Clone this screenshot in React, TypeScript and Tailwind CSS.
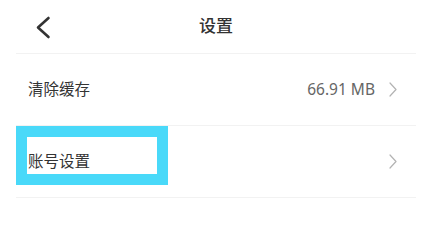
import React from "react";

const Chevron: React.FC = () => (
  <svg width="8" height="15" viewBox="0 0 8 15" fill="none" className="shrink-0">
    <polyline points="1,1 7,7.5 1,14" stroke="#b3b3b3" strokeWidth="1.2" strokeLinecap="round" strokeLinejoin="round" />
  </svg>
);

const App: React.FC = () => {
  return (
    <div
      className="w-[423px] h-[206px] bg-white overflow-hidden text-[#333]"
      style={{ fontFamily: '"Noto Sans", "Noto Sans CJK SC", sans-serif' }}
    >
      <div className="ml-4 mr-[7px]">
        {/* 顶部栏 */}
        <div className="relative h-[54px] border-b border-[#f2f2f2] flex items-center justify-center">
          <svg
            width="16"
            height="24"
            viewBox="0 0 16 24"
            fill="none"
            className="absolute left-[19px] top-[15px]"
          >
            <polyline points="13.5,3 3,12.5 13.5,22" stroke="#333" strokeWidth="2.6" strokeLinecap="round" strokeLinejoin="round" />
          </svg>
          <span className="text-[17px] font-medium leading-none -mt-[2px]">设置</span>
        </div>

        {/* 清除缓存 */}
        <div className="h-[72px] border-b border-[#f2f2f2] flex items-center pl-3 pr-[19px]">
          <span className="text-[15.5px] leading-none flex-1">清除缓存</span>
          <span className="text-[15.5px] leading-none text-[#666] mr-[14px]">66.91 MB</span>
          <Chevron />
        </div>

        {/* 账号设置 */}
        <div className="relative h-[72px] border-b border-[#f2f2f2] flex items-center pl-3 pr-[19px]">
          <div className="absolute left-0 top-0 w-[152px] h-[59px] border-[11px] border-[#49d9f9]" />
          <span className="relative text-[15.5px] leading-none flex-1 mt-[1px]">账号设置</span>
          <Chevron />
        </div>
      </div>
    </div>
  );
};

export default App;
